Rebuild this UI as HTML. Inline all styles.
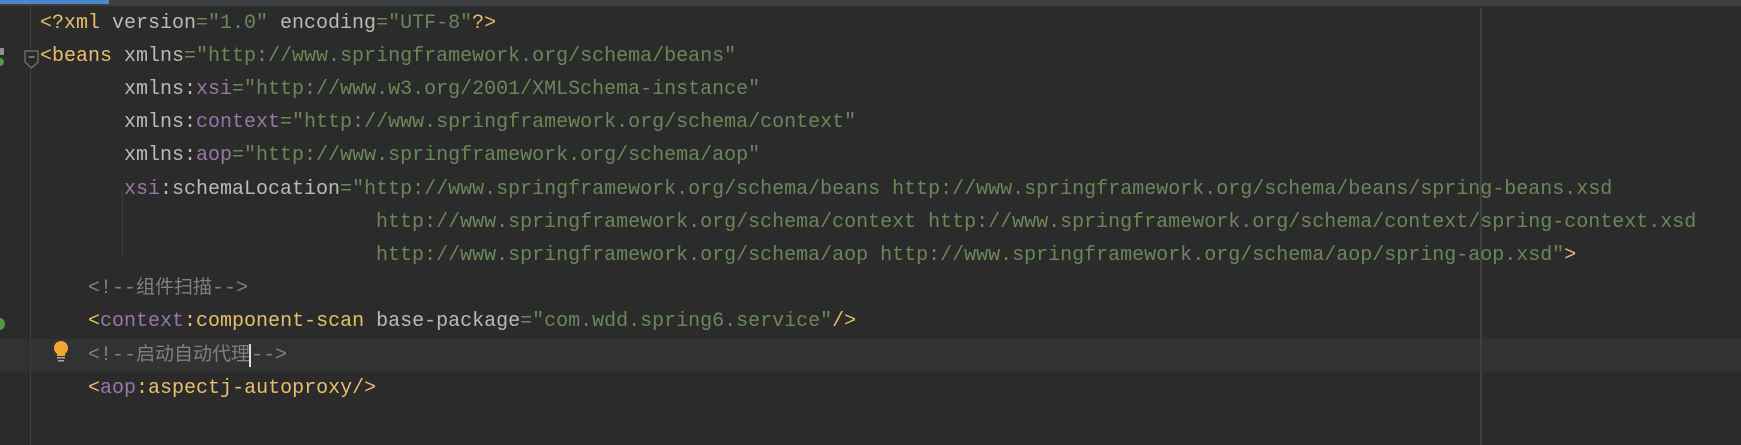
<!DOCTYPE html>
<html><head><meta charset="utf-8"><style>
html,body{margin:0;padding:0;}
body{width:1741px;height:445px;background:#2b2b2b;position:relative;overflow:hidden;font-family:"Liberation Mono","Noto Sans CJK SC",monospace;font-size:20px;}
.top{position:absolute;left:0;top:0;width:1741px;height:6px;background:#3c3f41;}
.top .b{position:absolute;left:0;top:0;width:109px;height:4px;background:#4a88c7;}
.gut{position:absolute;left:30px;top:6px;width:1px;height:439px;background:#3f3f3f;}
.guide{position:absolute;left:1480px;top:8px;width:2px;height:437px;background:#404040;}
.hl{position:absolute;left:0;top:339px;width:1741px;height:33px;background:#323232;}
.ln{position:absolute;left:40px;height:33px;line-height:33px;white-space:pre;color:#bababa;}
.t{color:#e8bf6a}.s{color:#6a8759}.n{color:#9876aa}.c{color:#808080}
.cj{font-size:19px}
.ig{position:absolute;left:122px;top:190px;width:1px;height:66px;background:#3a3a3a;}
</style></head><body>
<div class="top"><div class="b"></div></div>
<div class="hl"></div>
<div class="gut"></div>
<div class="guide"></div>
<div class="ig"></div>
<svg style="position:absolute;left:24px;top:50px" width="16" height="20"><path d="M1 1H14V12L7.5 18L1 12Z" fill="#2b2b2b" stroke="#6a6a6a" stroke-width="1.5"/><path d="M4.5 7H10.5" stroke="#8a8a8a" stroke-width="1.5"/></svg>
<div style="position:absolute;left:0;top:48px;width:4px;height:7px;background:#8a8f94"></div>
<div style="position:absolute;left:-4px;top:58px;width:8px;height:8px;border-radius:50%;background:#4e9a3c"></div>
<div style="position:absolute;left:-5px;top:318px;width:10px;height:12px;border-radius:50%;background:#4e9a3c"></div>
<svg style="position:absolute;left:52px;top:340px" width="18" height="24"><circle cx="9" cy="8" r="7" fill="#f0a732"/><rect x="5" y="12" width="8" height="4" fill="#f0a732"/><rect x="5" y="17" width="8" height="1.5" fill="#aaa"/><rect x="6" y="20" width="6" height="1.5" fill="#aaa"/></svg>
<div class="ln" style="top:7px"><span class="t">&lt;?xml </span>version<span class="s">="1.0" </span>encoding<span class="s">="UTF-8"</span><span class="t">?&gt;</span></div>
<div class="ln" style="top:40px"><span class="t">&lt;beans </span>xmlns<span class="s">="http://www.springframework.org/schema/beans"</span></div>
<div class="ln" style="top:73px">       xmlns:<span class="n">xsi</span><span class="s">="http://www.w3.org/2001/XMLSchema-instance"</span></div>
<div class="ln" style="top:106px">       xmlns:<span class="n">context</span><span class="s">="http://www.springframework.org/schema/context"</span></div>
<div class="ln" style="top:139px">       xmlns:<span class="n">aop</span><span class="s">="http://www.springframework.org/schema/aop"</span></div>
<div class="ln" style="top:173px">       <span class="n">xsi</span>:schemaLocation<span class="s">="http://www.springframework.org/schema/beans http://www.springframework.org/schema/beans/spring-beans.xsd</span></div>
<div class="ln s" style="top:206px">                            http://www.springframework.org/schema/context http://www.springframework.org/schema/context/spring-context.xsd</div>
<div class="ln" style="top:239px"><span class="s">                            http://www.springframework.org/schema/aop http://www.springframework.org/schema/aop/spring-aop.xsd"</span><span class="t">&gt;</span></div>
<div class="ln c" style="top:272px">    &lt;!--<span class="cj">组件扫描</span>--&gt;</div>
<div class="ln" style="top:305px">    <span class="t">&lt;</span><span class="n">context</span><span class="t">:component-scan </span>base-package<span class="s">="com.wdd.spring6.service"</span><span class="t">/&gt;</span></div>
<div class="ln c" style="top:339px">    &lt;!--<span class="cj">启动自动代理</span><span style="border-left:2px solid #ddd;margin-left:-1px"></span>--&gt;</div>
<div class="ln" style="top:372px">    <span class="t">&lt;</span><span class="n">aop</span><span class="t">:aspectj-autoproxy/&gt;</span></div>
</body></html>
